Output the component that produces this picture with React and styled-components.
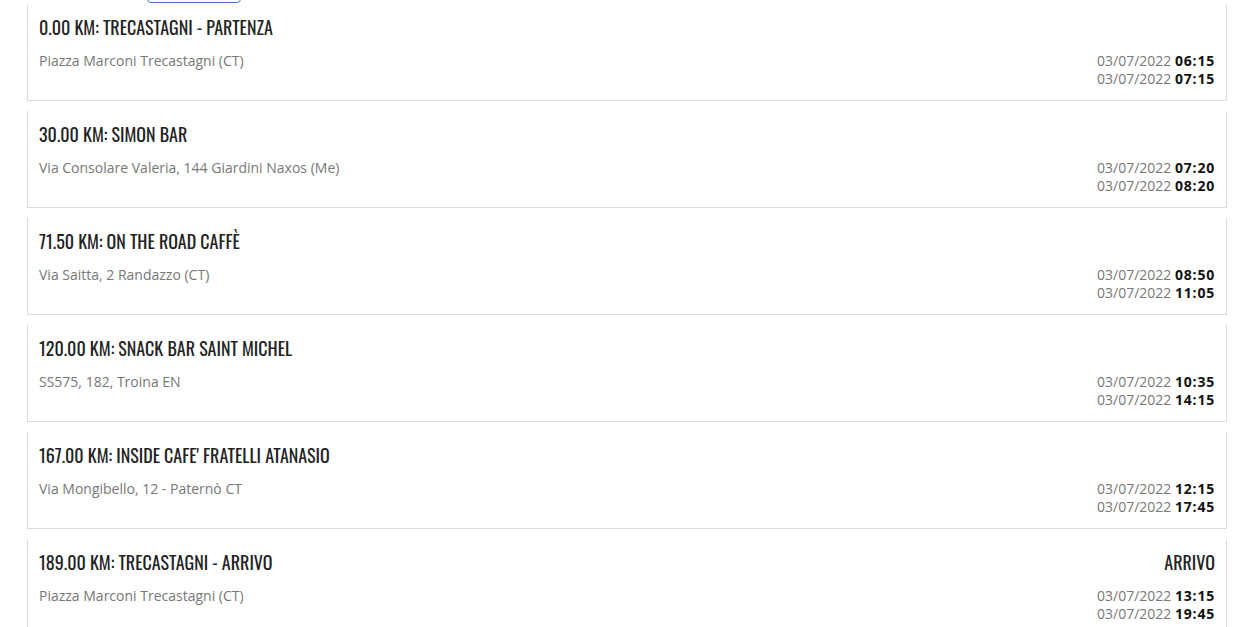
import React from "react";
import styled, { createGlobalStyle } from "styled-components";

const GlobalStyle = createGlobalStyle`
	html, body {
		margin: 0;
		padding: 0;
		background: #fff;
		font-family: "Open Sans", "Noto Sans", sans-serif;
	}
`

const Page = styled.div`
	width: 1200px;
	margin: 0 0 0 27px;
`

const Toolbar = styled.div`
	display: flex;
	align-items: flex-end;
	height: 3px;
	margin-bottom: 1px;
	padding-left: 120px;
	overflow: hidden;
`

const ToolButton = styled.div`
	flex: none;
	box-sizing: border-box;
	width: 94px;
	height: 30px;
	border: 1.5px solid #3d78c2;
	border-radius: 4px;
	background: #fff;
`

const StageList = styled.div`
	display: flex;
	flex-direction: column;
	gap: 10px;
`

const StageCard = styled.div`
	display: flex;
	justify-content: space-between;
	height: 97px;
	box-sizing: border-box;
	padding: 11px 11px 0 11px;
	border: 1px solid #dcdcdc;
	border-top: none;
	background: #fff;
`

const StageMain = styled.div`
	display: flex;
	flex-direction: column;
`

const StageTitle = styled.div`
	font-family: "Oswald", "Liberation Sans Narrow", "DejaVu Sans Condensed", "Roboto Condensed", sans-serif;
	font-size: 18px;
	line-height: 24px;
	height: 24px;
	color: #222;
	text-transform: uppercase;
`

const Address = styled.div`
	margin-top: 13px;
	font-size: 14px;
	line-height: 18px;
	color: #777;
`

const StageTimes = styled.div`
	display: flex;
	flex-direction: column;
	align-items: flex-end;
`

const Status = styled(StageTitle)`
	text-align: right;
`

const Times = styled.div`
	margin-top: 13px;
	font-size: 14px;
	line-height: 18px;
	text-align: right;
	color: #777;

	b {
		color: #111;
		font-weight: 700;
		letter-spacing: 0.8px;
	}
`

const stages = [
	{ km: "0.00", name: "Trecastagni - Partenza", address: "Piazza Marconi Trecastagni (CT)", date: "03/07/2022", from: "06:15", to: "07:15" },
	{ km: "30.00", name: "Simon Bar", address: "Via Consolare Valeria, 144 Giardini Naxos (Me)", date: "03/07/2022", from: "07:20", to: "08:20" },
	{ km: "71.50", name: "On the road caffè", address: "Via Saitta, 2 Randazzo (CT)", date: "03/07/2022", from: "08:50", to: "11:05" },
	{ km: "120.00", name: "Snack Bar Saint Michel", address: "SS575, 182, Troina EN", date: "03/07/2022", from: "10:35", to: "14:15" },
	{ km: "167.00", name: "Inside Cafe' Fratelli Atanasio", address: "Via Mongibello, 12 - Paternò CT", date: "03/07/2022", from: "12:15", to: "17:45" },
	{ km: "189.00", name: "Trecastagni - Arrivo", address: "Piazza Marconi Trecastagni (CT)", date: "03/07/2022", from: "13:15", to: "19:45", status: "Arrivo" },
];

export default function App() {
	return (
		<Page>
			<GlobalStyle />
			<Toolbar>
				<ToolButton />
			</Toolbar>
			<StageList>
				{stages.map(stage => (
					<StageCard key={stage.km}>
						<StageMain>
							<StageTitle>{stage.km} km: {stage.name}</StageTitle>
							<Address>{stage.address}</Address>
						</StageMain>
						<StageTimes>
							<Status>{stage.status || "\u00a0"}</Status>
							<Times>
								<div>{stage.date} <b>{stage.from}</b></div>
								<div>{stage.date} <b>{stage.to}</b></div>
							</Times>
						</StageTimes>
					</StageCard>
				))}
			</StageList>
		</Page>
	);
}
